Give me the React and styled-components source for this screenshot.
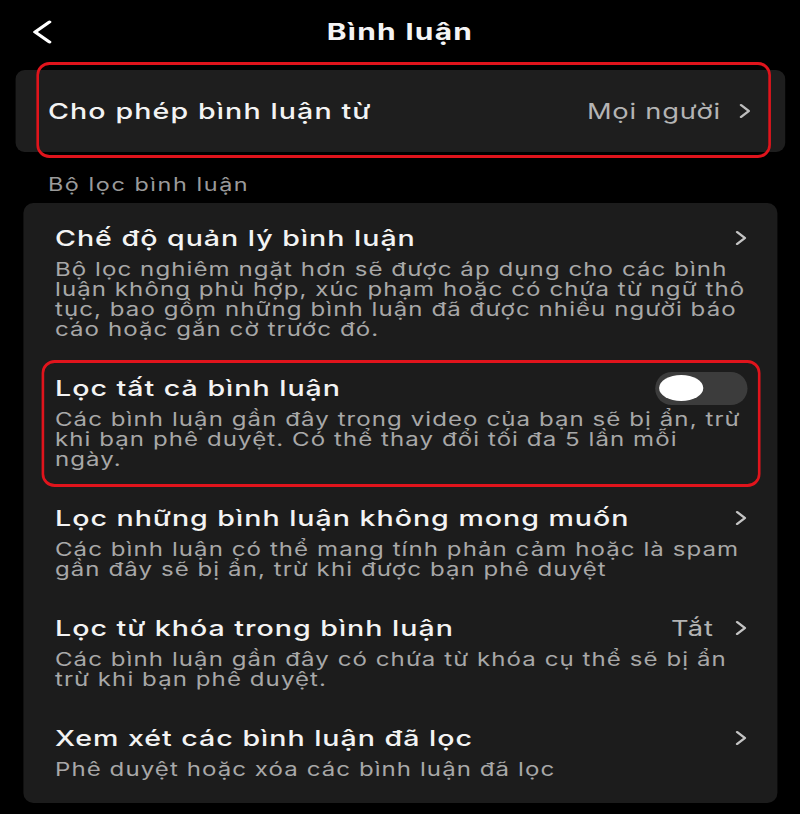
import React from "react";
import styled, { createGlobalStyle } from "styled-components";

/* The reference is a phone screen shown stretched horizontally; the page is
   laid out at phone width and widened by one factor. */
const S = 1.3;
const h = (v) => +(v / S).toFixed(2);

const GlobalStyle = createGlobalStyle`
  html, body { margin: 0; padding: 0; background: #000; }
  body { font-family: Inter, "Noto Sans", sans-serif; -webkit-font-smoothing: antialiased; }
  * { box-sizing: border-box; }
`;

const Stage = styled.div`
  width: 800px;
  min-height: 814px;
  overflow: hidden;
  background: #000;
`;

const Page = styled.div`
  width: ${h(800)}px;
  min-height: 814px;
  transform: scaleX(${S});
  transform-origin: 0 0;
  background: #000;
  color: #f2f2f2;
  display: flex;
  flex-direction: column;
  padding-bottom: 8px;
`;

const Header = styled.header`
  height: 64px;
  display: grid;
  grid-template-columns: ${h(120)}px 1fr ${h(120)}px;
  align-items: center;
`;

const BackButton = styled.button`
  background: none;
  border: 0;
  padding: 0 0 0 ${h(32)}px;
  height: 64px;
  display: flex;
  align-items: center;
  cursor: pointer;
`;

const Title = styled.h1`
  margin: 0;
  text-align: center;
  font-size: 23px;
  font-weight: 700;
  letter-spacing: 1px;
  color: #f4f4f4;
`;

const TopCard = styled.div`
  position: relative;
  margin: 6px ${h(15)}px 0 ${h(16)}px;
  height: 82px;
  padding: 0 ${h(33)}px 0 ${h(32)}px;
  background: #1e1e1e;
  border-radius: ${h(9)}px / 9px;
  display: flex;
  align-items: center;
  justify-content: space-between;
`;

const Highlight = styled.div`
  position: absolute;
  top: ${(p) => p.$top}px;
  bottom: ${(p) => p.$bottom}px;
  left: ${(p) => h(p.$left)}px;
  right: ${(p) => h(p.$right)}px;
  border-style: solid;
  border-color: #e0141c;
  border-width: 3px ${h(3)}px;
  border-radius: ${h(13)}px / 13px;
  pointer-events: none;
`;

const RowTitle = styled.span`
  font-size: 22px;
  font-weight: 500;
  letter-spacing: ${(p) => p.$ls ?? 0.75}px;
  color: #f3f3f3;
  white-space: nowrap;
`;

const Trailing = styled.div`
  display: flex;
  align-items: center;
  gap: ${(p) => h(p.$gap ?? 18)}px;
`;

const Value = styled.span`
  font-size: 21px;
  letter-spacing: ${(p) => p.$ls ?? 0.6}px;
  color: #b4b4b4;
`;

const SectionLabel = styled.div`
  margin: 21px 0 6px ${h(48)}px;
  font-size: 18px;
  line-height: 24px;
  letter-spacing: 1.2px;
  color: #9a9a9a;
`;

const Card = styled.section`
  margin: 0 ${h(23)}px 0 ${h(24)}px;
  background: #1c1c1c;
  border-radius: ${h(10)}px / 10px;
  padding: 22px 0 24px;
  display: flex;
  flex-direction: column;
  gap: 36px;
`;

const Row = styled.div`
  position: relative;
  padding: 0 ${h(30)}px 0 ${h(31)}px;
`;

const RowHead = styled.div`
  height: 26px;
  display: flex;
  align-items: center;
  justify-content: space-between;
`;

const Desc = styled.p`
  margin: 8px 0 0;
  font-size: 18.5px;
  line-height: 20px;
  letter-spacing: 0.82px;
  color: #a8a8a8;
  white-space: nowrap;
`;

const Switch = styled.div`
  width: ${h(92)}px;
  height: 33px;
  border-radius: ${h(17)}px / 17px;
  background: #3c3c3c;
  display: flex;
  align-items: center;
  padding: 0 ${h(4)}px;
  flex-shrink: 0;
`;

const Knob = styled.div`
  width: ${h(44)}px;
  height: 26px;
  border-radius: 50%;
  background: #fff;
`;

const Chevron = ({ color = "#c4c4c4" }) => (
  <svg width="10" height="16" viewBox="0 0 10 16" fill="none">
    <polyline points="2,2 8,8 2,14" stroke={color} strokeWidth="2" strokeLinecap="round" strokeLinejoin="round" />
  </svg>
);

const BackIcon = () => (
  <svg width="15" height="24" viewBox="0 0 15 24" fill="none">
    <polyline points="13,2 2,12 13,22" stroke="#fff" strokeWidth="3" strokeLinecap="round" strokeLinejoin="round" />
  </svg>
);

const rows = [
  {
    title: "Chế độ quản lý bình luận",
    trailing: "chevron",
    desc: [
      "Bộ lọc nghiêm ngặt hơn sẽ được áp dụng cho các bình",
      "luận không phù hợp, xúc phạm hoặc có chứa từ ngữ thô",
      "tục, bao gồm những bình luận đã được nhiều người báo",
      "cáo hoặc gắn cờ trước đó.",
    ],
  },
  {
    title: "Lọc tất cả bình luận",
    trailing: "switch",
    highlight: true,
    desc: [
      "Các bình luận gần đây trong video của bạn sẽ bị ẩn, trừ",
      "khi bạn phê duyệt. Có thể thay đổi tối đa 5 lần mỗi",
      "ngày.",
    ],
  },
  {
    title: "Lọc những bình luận không mong muốn",
    trailing: "chevron",
    desc: [
      "Các bình luận có thể mang tính phản cảm hoặc là spam",
      "gần đây sẽ bị ẩn, trừ khi được bạn phê duyệt",
    ],
  },
  {
    title: "Lọc từ khóa trong bình luận",
    trailing: "chevron",
    value: "Tắt",
    desc: [
      "Các bình luận gần đây có chứa từ khóa cụ thể sẽ bị ẩn",
      "trừ khi bạn phê duyệt.",
    ],
  },
  {
    title: "Xem xét các bình luận đã lọc",
    trailing: "chevron",
    desc: ["Phê duyệt hoặc xóa các bình luận đã lọc"],
  },
];

export default function App() {
  return (
    <>
      <GlobalStyle />
      <Stage>
        <Page>
          <Header>
            <BackButton aria-label="Quay lại">
              <BackIcon />
            </BackButton>
            <Title>Bình luận</Title>
            <span />
          </Header>

          <TopCard>
            <RowTitle $ls={0.85}>Cho phép bình luận từ</RowTitle>
            <Trailing $gap={18}>
              <Value>Mọi người</Value>
              <Chevron color="#bdbdbd" />
            </Trailing>
            <Highlight $top={-8} $bottom={-6} $left={20} $right={14} />
          </TopCard>

          <SectionLabel>Bộ lọc bình luận</SectionLabel>

          <Card>
            {rows.map((r) => (
              <Row key={r.title}>
                <RowHead>
                  <RowTitle>{r.title}</RowTitle>
                  {r.trailing === "switch" ? (
                    <Switch>
                      <Knob />
                    </Switch>
                  ) : (
                    <Trailing $gap={20}>
                      {r.value && <Value $ls={0.8}>{r.value}</Value>}
                      <Chevron />
                    </Trailing>
                  )}
                </RowHead>
                <Desc>
                  {r.desc.map((line, i) => (
                    <React.Fragment key={i}>
                      {i > 0 && <br />}
                      {line}
                    </React.Fragment>
                  ))}
                </Desc>
                {r.highlight && <Highlight $top={-15} $bottom={-18} $left={17} $right={17} />}
              </Row>
            ))}
          </Card>
        </Page>
      </Stage>
    </>
  );
}
